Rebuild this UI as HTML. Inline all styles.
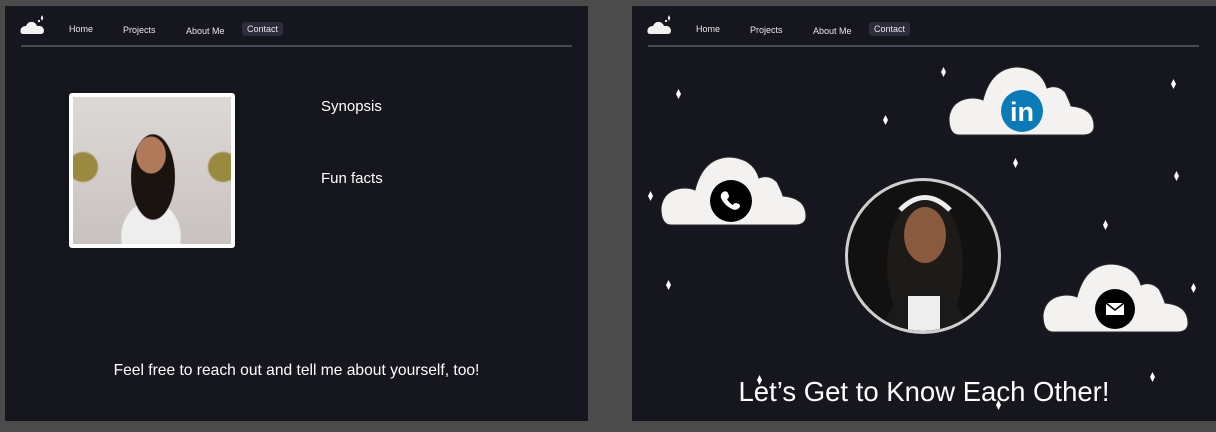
<!DOCTYPE html>
<html><head><style>
body{margin:0;width:1216px;height:432px;background:#4b4b4b;position:relative;overflow:hidden;font-family:"Liberation Sans",sans-serif;color:#fff}
.f{position:absolute;top:6px;height:415px;background:#16161e;overflow:hidden}
.a{position:absolute}
.nav{font-size:9px;color:#e8e8e8}
.ct{background:#2c2c3a;border-radius:3px;padding:2px 5px}
.line{position:absolute;height:2px;background:#4a4a52}
.st{position:absolute;width:5px;height:10px;background:#fff;clip-path:polygon(50% 0,100% 50%,50% 100%,0 50%)}
</style></head><body>
<div class="f" style="left:5px;width:583px">
<svg class="a" style="left:14px;top:8px" width="30" height="22" viewBox="0 0 28 22"><path d="M3 20 Q0 20 0.5 16 Q1.5 12 6 12 Q8 7 13 8 Q16 9 17 12 Q23 11 24 16 Q24 20 21 20Z" fill="#f4f2f0"/><path d="M22 1 L23.2 4 L22 7 L20.8 4Z" fill="#fff"/><circle cx="19" cy="7" r="1.1" fill="#fff"/></svg>
<div class="a nav" style="left:64px;top:18px">Home</div>
<div class="a nav" style="left:118px;top:19px">Projects</div>
<div class="a nav" style="left:181px;top:20px">About Me</div>
<div class="a nav ct" style="left:237px;top:16px">Contact</div>
<div class="line" style="left:16px;top:39px;width:551px"></div>
<div class="a" style="left:64px;top:87px;width:158px;height:147px;background:#fff;border-radius:3px;padding:4px">
<div style="width:158px;height:147px;background:radial-gradient(ellipse 16px 20px at 78px 58px,#b07a5a 90%,transparent 95%),radial-gradient(ellipse 36px 70px at 80px 80px,#1a1410 60%,transparent 62%),radial-gradient(ellipse 42px 50px at 78px 140px,#eee 70%,transparent 72%),radial-gradient(circle at 10px 70px,#9a8a40 14px,transparent 16px),radial-gradient(circle at 150px 70px,#9a8a40 14px,transparent 16px),linear-gradient(#ddd9d6,#c8c2c0)"></div></div>
<div class="a" style="left:316px;top:92px;font-size:15px">Synopsis</div>
<div class="a" style="left:316px;top:164px;font-size:15px">Fun facts</div>
<div class="a" style="left:0;width:583px;text-align:center;top:356px;font-size:15.6px">Feel free to reach out and tell me about yourself, too!</div>
</div>
<div class="f" style="left:632px;width:584px">
<svg class="a" style="left:14px;top:8px" width="30" height="22" viewBox="0 0 28 22"><path d="M3 20 Q0 20 0.5 16 Q1.5 12 6 12 Q8 7 13 8 Q16 9 17 12 Q23 11 24 16 Q24 20 21 20Z" fill="#f4f2f0"/><path d="M22 1 L23.2 4 L22 7 L20.8 4Z" fill="#fff"/><circle cx="19" cy="7" r="1.1" fill="#fff"/></svg>
<div class="a nav" style="left:64px;top:18px">Home</div>
<div class="a nav" style="left:118px;top:19px">Projects</div>
<div class="a nav" style="left:181px;top:20px">About Me</div>
<div class="a nav ct" style="left:237px;top:16px">Contact</div>
<div class="line" style="left:16px;top:39px;width:551px"></div>
</div>
<svg class="a" style="left:0;top:0" width="1216" height="432">
<defs><g id="cl"><path d="M10 69 Q0 69 0 52 Q2 34 22 32 Q30 32 34 34 Q42 2 68 1 Q92 2 98 22 Q108 18 116 26 Q121 36 122 40 Q145 42 145 60 Q145 69 134 69Z" fill="#f4f2f0" stroke="#2a2a2a" stroke-width="1"/></g></defs>
<use href="#cl" x="661" y="156"/><use href="#cl" x="949" y="66"/><use href="#cl" x="1043" y="263"/>
<circle cx="731" cy="201" r="21" fill="#000"/>
<path d="M723 192 q3-2 5 1 l1 3 q0 2-2 3 q2 4 6 6 q1-2 3-2 l3 1 q2 2 0 4 q-3 3-7 1 q-8-4-11-11 q-1-4 2-6Z" fill="#fff"/>
<circle cx="1022" cy="111" r="21" fill="#0a7bb8"/>
<text x="1022" y="121" text-anchor="middle" font-family="Liberation Sans" font-weight="bold" font-size="27" fill="#fff">in</text>
<circle cx="1115" cy="309" r="20" fill="#000"/>
<rect x="1106" y="303" width="18" height="12" fill="#fff"/><path d="M1106 303 L1115 310 L1124 303" stroke="#000" fill="none" stroke-width="1.5"/>
<clipPath id="cc"><circle cx="923" cy="256" r="75"/></clipPath>
<circle cx="923" cy="256" r="78" fill="#cfcfcf"/>
<g clip-path="url(#cc)"><rect x="840" y="170" width="170" height="170" fill="#111"/>
<ellipse cx="925" cy="265" rx="38" ry="70" fill="#1e1a18"/>
<ellipse cx="925" cy="235" rx="21" ry="28" fill="#8a5a3e"/>
<path d="M900 210 Q925 185 950 210" stroke="#eee" stroke-width="5" fill="none"/>
<path d="M880 340 Q890 290 925 285 Q960 290 970 340Z" fill="#1a1a1a"/>
<rect x="908" y="296" width="32" height="40" fill="#eee"/></g>
</svg>
<div class="st" style="left:676px;top:89px"></div><div class="st" style="left:941px;top:67px"></div><div class="st" style="left:883px;top:115px"></div><div class="st" style="left:1171px;top:79px"></div><div class="st" style="left:1013px;top:158px"></div><div class="st" style="left:1174px;top:171px"></div><div class="st" style="left:648px;top:191px"></div><div class="st" style="left:1103px;top:220px"></div><div class="st" style="left:666px;top:280px"></div><div class="st" style="left:1191px;top:283px"></div><div class="st" style="left:757px;top:375px"></div><div class="st" style="left:1150px;top:372px"></div><div class="st" style="left:996px;top:400px"></div>
<div class="a" style="left:632px;width:584px;text-align:center;top:376px;font-size:27.5px">Let’s Get to Know Each Other!</div>
</body></html>
